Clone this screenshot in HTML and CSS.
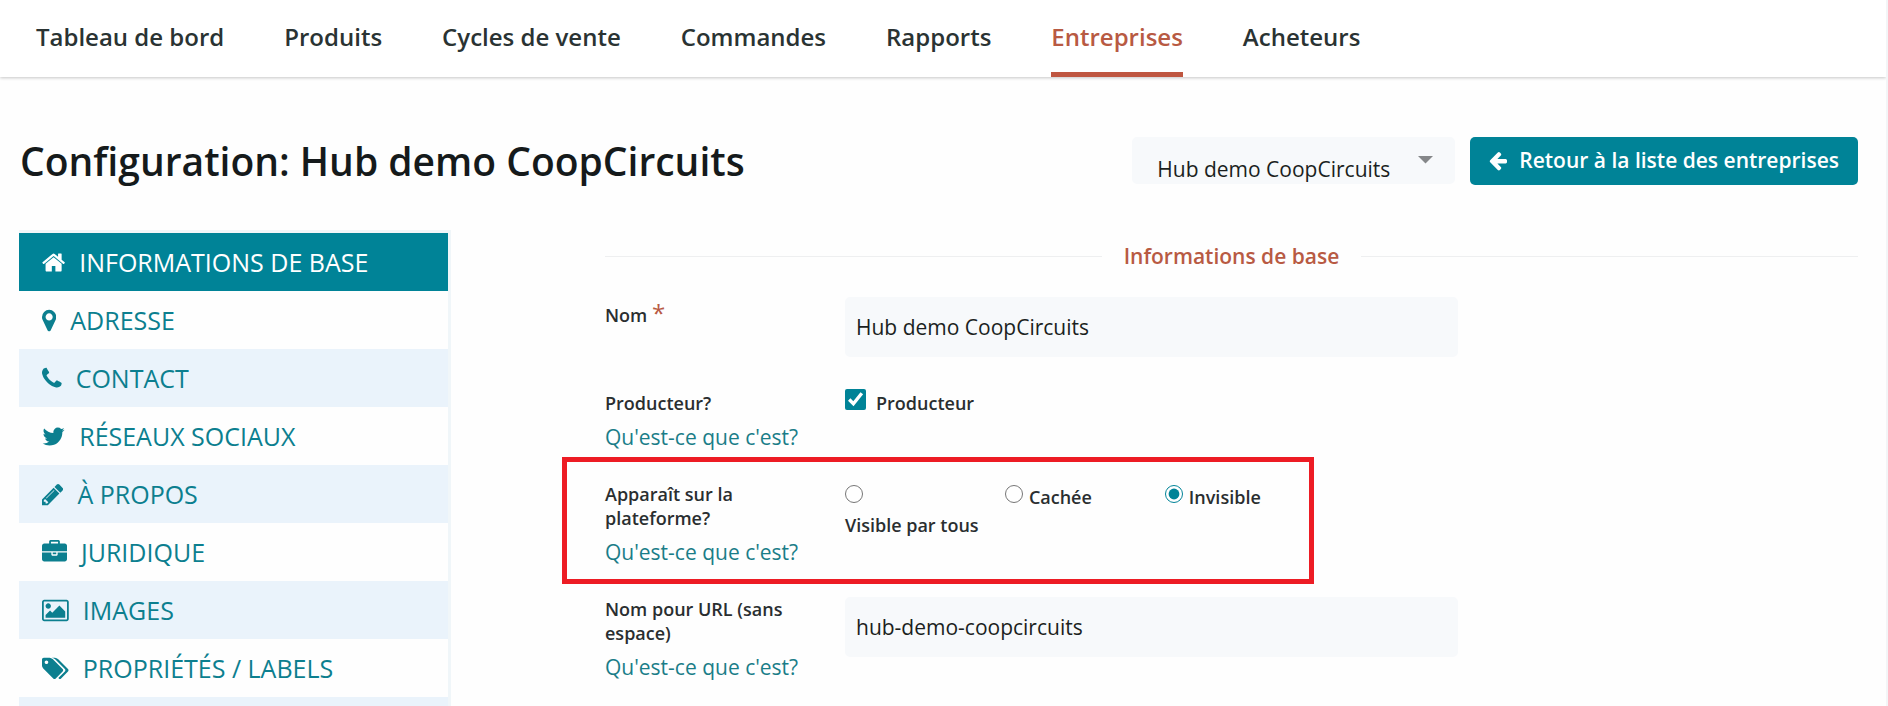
FILE: index.html
```html
<!DOCTYPE html>
<html lang="fr">
<head>
<meta charset="utf-8">
<title>Configuration: Hub demo CoopCircuits</title>
<link rel="stylesheet" href="styles.css">
</head>
<body>
<nav class="topnav">
  <a href="#">Tableau de bord</a>
  <a href="#">Produits</a>
  <a href="#">Cycles de vente</a>
  <a href="#">Commandes</a>
  <a href="#">Rapports</a>
  <a href="#" class="active" aria-current="page">Entreprises</a>
  <a href="#">Acheteurs</a>
</nav>

<header class="page-head">
  <h1>Configuration: Hub demo CoopCircuits</h1>
  <div class="picker">
    <select aria-label="Entreprise"><option>Hub demo CoopCircuits</option></select>
    <svg class="caret" viewBox="0 0 14 7" aria-hidden="true"><path d="M0 0h14L7 7z"/></svg>
  </div>
  <a href="#" class="button"><svg viewBox="128 0 1536 1792" aria-hidden="true"><path d="M1664 896v128q0 53-32.5 90.5t-84.5 37.5h-704l293 294q38 36 38 90t-38 90l-75 76q-37 37-90 37-52 0-91-37l-651-652q-37-37-37-90 0-52 37-91l651-650q38-38 91-38 52 0 90 38l75 74q38 38 38 91t-38 91l-293 293h704q52 0 84.5 37.5t32.5 90.5z"/></svg>Retour à la liste des entreprises</a>
</header>

<div class="layout">
  <nav class="side">
    <a href="#" class="selected"><svg viewBox="64 0 1664 1792" aria-hidden="true"><path d="M1472 992v480q0 26-19 45t-45 19h-384v-384h-256v384h-384q-26 0-45-19t-19-45v-480q0-1 .5-3t.5-3l575-474 575 474q1 2 1 6zm223-69l-62 74q-8 9-21 11h-3q-13 0-21-7l-692-577-692 577q-12 8-24 7-13-2-21-11l-62-74q-8-10-7-23.5t11-21.5l719-599q32-26 76-26t76 26l244 204v-195q0-14 9-23t23-9h192q14 0 23 9t9 23v408l219 182q10 8 11 21.5t-7 23.5z"/></svg>INFORMATIONS DE BASE</a>
    <a href="#"><svg viewBox="384 0 1024 1792" aria-hidden="true"><path d="M1152 640q0-106-75-181t-181-75-181 75-75 181 75 181 181 75 181-75 75-181zm256 0q0 109-33 179l-364 774q-16 33-47.5 52t-67.5 19-67.5-19-46.5-52l-365-774q-33-70-33-179 0-212 150-362t362-150 362 150 150 362z"/></svg>ADRESSE</a>
    <a href="#"><svg viewBox="192 0 1408 1792" aria-hidden="true"><path d="M1600 1240q0 27-10 70.5t-21 68.5q-21 50-122 106-94 51-186 51-27 0-52.5-3.5t-57.5-12.5-47.5-14.5-55.5-20.5-49-18q-98-35-175-83-128-79-264.5-215.5t-215.5-264.5q-48-77-83-175-3-9-18-49t-20.5-55.5-14.5-47.5-12.5-57.5-3.5-52.5q0-92 51-186 56-101 106-122 25-11 68.5-21t70.5-10q14 0 21 3 18 6 53 76 11 19 30 54t35 63.5 31 53.5q3 4 17.5 25t21.5 35.5 7 28.5q0 20-28.5 50t-62 55-62 53-28.5 46q0 9 5 22.5t8.5 20.5 14 24 11.5 19q76 137 174 235t235 174q2 1 19 11.5t24 14 20.5 8.5 22.5 5q18 0 46-28.5t53-62 55-62 50-28.5q14 0 28.5 7t35.5 21.5 25 17.5q25 15 53.5 31t63.5 35 54 30q70 35 76 53 3 7 3 21z"/></svg>CONTACT</a>
    <a href="#"><svg viewBox="64 0 1664 1792" aria-hidden="true"><path d="M1684 408q-67 98-162 167 1 14 1 42 0 130-38 259.5t-115.5 248.5-184.5 210.5-258 146-323 54.5q-271 0-496-145 35 4 78 4 225 0 401-138-105-2-188-64.5t-114-159.5q33 5 61 5 43 0 85-11-112-23-185.5-111.5t-73.5-205.5v-4q68 38 146 41-66-44-105-115t-39-154q0-88 44-163 121 149 294.5 238.5t371.5 99.5q-8-38-8-74 0-134 94.5-228.5t228.5-94.5q140 0 236 102 109-21 205-78-37 115-142 178 93-10 186-50z"/></svg>RÉSEAUX SOCIAUX</a>
    <a href="#"><svg viewBox="128 0 1536 1792" aria-hidden="true"><path d="M491 1536l91-91-235-235-91 91v107h128v128h107zm523-928q0-22-22-22-10 0-17 7l-542 542q-7 7-7 17 0 22 22 22 10 0 17-7l542-542q7-7 7-17zm-54-192l416 416-832 832h-416v-416zm683 96q0 53-37 90l-166 166-416-416 166-165q36-38 90-38 53 0 91 38l235 234q37 39 37 91z"/></svg>À PROPOS</a>
    <a href="#"><svg viewBox="0 0 1792 1792" aria-hidden="true"><path d="M640 256h512v-128h-512v128zm1152 640v480q0 66-47 113t-113 47h-1472q-66 0-113-47t-47-113v-480h672v160q0 26 19 45t45 19h320q26 0 45-19t19-45v-160h672zm-768 0v128h-256v-128h256zm768-480v384h-1792v-384q0-66 47-113t113-47h352v-160q0-40 28-68t68-28h576q40 0 68 28t28 68v160h352q66 0 113 47t47 113z"/></svg>JURIDIQUE</a>
    <a href="#"><svg viewBox="-64 0 1920 1792" aria-hidden="true"><path d="M576 576q0 80-56 136t-136 56-136-56-56-136 56-136 136-56 136 56 56 136zm1024 384v448h-1408v-192l320-320 160 160 512-512zm96-704h-1600q-13 0-22.5 9.5t-9.5 22.5v1216q0 13 9.5 22.5t22.5 9.5h1600q13 0 22.5-9.5t9.5-22.5v-1216q0-13-9.5-22.5t-22.5-9.5zm160 32v1216q0 66-47 113t-113 47h-1600q-66 0-113-47t-47-113v-1216q0-66 47-113t113-47h1600q66 0 113 47t47 113z"/></svg>IMAGES</a>
    <a href="#"><svg viewBox="-64 0 1920 1792" aria-hidden="true"><path d="M384 448q0-53-37.5-90.5t-90.5-37.5-90.5 37.5-37.5 90.5 37.5 90.5 90.5 37.5 90.5-37.5 37.5-90.5zm1067 576q0 53-37 90l-491 492q-39 37-91 37-53 0-90-37l-715-716q-38-37-64.5-101t-26.5-117v-416q0-52 38-90t90-38h416q53 0 117 26.5t102 64.5l715 714q37 39 37 91zm384 0q0 53-37 90l-491 492q-39 37-91 37-36 0-59-14t-53-45l470-470q37-37 37-90 0-52-37-91l-715-714q-38-38-102-64.5t-117-26.5h224q53 0 117 26.5t102 64.5l715 714q37 39 37 91z"/></svg>PROPRIÉTÉS / LABELS</a>
    <span class="rest"></span>
  </nav>

  <form class="form">
    <h2><span>Informations de base</span></h2>

    <div class="row row-name">
      <div class="label"><label for="name">Nom <span class="required">*</span></label></div>
      <input class="text" id="name" type="text" value="Hub demo CoopCircuits">
    </div>

    <div class="row row-producer">
      <div class="label"><span>Producteur?</span><a href="#">Qu'est-ce que c'est?</a></div>
      <label class="check"><input type="checkbox" checked>Producteur</label>
    </div>

    <div class="row highlight" role="radiogroup" aria-labelledby="visible-label">
      <div class="label"><span id="visible-label">Apparaît sur la plateforme?</span><a href="#">Qu'est-ce que c'est?</a></div>
      <div class="radios">
        <label class="radio stacked"><input type="radio" name="visible">Visible par tous</label>
        <label class="radio"><input type="radio" name="visible">Cachée</label>
        <label class="radio"><input type="radio" name="visible" checked>Invisible</label>
      </div>
    </div>

    <div class="row">
      <div class="label"><label for="permalink">Nom pour URL (sans espace)</label><a href="#">Qu'est-ce que c'est?</a></div>
      <input class="text" id="permalink" type="text" value="hub-demo-coopcircuits">
    </div>
  </form>
</div>
</body>
</html>
```
FILE: styles.css
```css
* {
  box-sizing: border-box;
}

html {
  height: 100%;
}

body {
  margin: 0;
  min-height: 100%;
  border-right: 2px solid #f3f5f7;
  background: #fefefe;
  color: #2a2e30;
  font-family: "Open Sans", "Noto Sans", sans-serif;
  font-size: 21px;
}

a {
  color: #1a7d88;
  text-decoration: none;
}

svg {
  display: block;
  fill: currentColor;
}

.topnav {
  display: flex;
  gap: 60px;
  padding: 0 36px;
  background: #fff;
  box-shadow: 0 1px 3px rgba(0, 0, 0, 0.22);
}

.topnav a {
  padding: 20px 0 19px;
  border-bottom: 5px solid transparent;
  color: #2a3333;
  font-size: 24px;
  font-weight: 600;
  line-height: 33px;
}

.topnav .active {
  border-color: #bf5640;
  color: #b85a43;
}

.page-head {
  display: flex;
  align-items: flex-start;
  gap: 15px;
  padding: 60px 28px 0 20px;
}

h1 {
  flex: 1;
  margin: 0;
  color: #151a1b;
  font-size: 39px;
  font-weight: 600;
  line-height: 48px;
}

.picker {
  position: relative;
  width: 323px;
}

.picker select {
  width: 100%;
  height: 47px;
  padding: 16px 40px 0 25px;
  border: 0;
  border-radius: 5px;
  appearance: none;
  background: #f7f9fb;
  color: #1b1f21;
  font: inherit;
  line-height: 30px;
}

.caret {
  position: absolute;
  top: 19px;
  right: 22px;
  width: 15px;
  color: #858789;
  pointer-events: none;
}

.button {
  display: flex;
  align-items: center;
  gap: 12px;
  height: 48px;
  padding: 0 19px 2px;
  border-radius: 5px;
  background: #008397;
  color: #fff;
  font-weight: 600;
}

.button svg {
  height: 21px;
}

.layout {
  display: grid;
  grid-template-columns: 432fr 1253fr;
  column-gap: 154px;
  align-items: start;
  padding: 45px 28px 0 19px;
}

.side {
  border: solid #f0f6f9;
  border-width: 3px 3px 0 0;
}

.side a {
  display: flex;
  align-items: center;
  gap: 14px;
  height: 58px;
  padding: 0 23px;
  color: #0c7f8f;
  font-size: 25px;
}

.side a:nth-child(odd) {
  background: #eaf3fb;
}

.side .selected:first-child {
  background: #008397;
  color: #fff;
}

.side svg {
  height: 25px;
}

.rest {
  display: block;
  height: 9px;
  background: #eaf3fb;
}

h2 {
  display: flex;
  align-items: center;
  gap: 22px;
  margin: 11px 0 26px;
  color: #b85a43;
  font-size: 21px;
  font-weight: 600;
  line-height: 30px;
}

h2::before,
h2::after {
  flex: 1;
  height: 1px;
  background: #eeeff0;
  content: "";
}

.row {
  display: grid;
  grid-template-columns: 240fr 613fr 400fr;
}

.row-name {
  min-height: 92px;
}

.label {
  padding-right: 32px;
  font-size: 18px;
  font-weight: 600;
  line-height: 24px;
}

.label > span,
.label > label {
  display: block;
}

.label > a {
  display: block;
  margin-top: 7px;
  font-size: 21px;
  font-weight: 400;
  line-height: 30px;
}

.required {
  color: #b85a43;
  font-size: 24px;
  font-weight: 400;
}

.row-name .label {
  padding-top: 4px;
}

.row-producer .label {
  padding-top: 2px;
}

.text {
  width: 100%;
  height: 60px;
  padding: 0 11px;
  border: 0;
  border-radius: 5px;
  background: #f7f9fb;
  color: #1b1f21;
  font: inherit;
}

.check,
.radio {
  font-size: 18px;
  font-weight: 600;
  line-height: 24px;
}

input {
  margin: 0;
  accent-color: #008397;
}

.check {
  display: flex;
  align-items: flex-start;
  gap: 10px;
  line-height: 28px;
}

.check input {
  width: 21px;
  height: 21px;
}

.highlight {
  grid-template-columns: 240fr 464fr;
  width: 60%;
  margin: 5px 0 13px -43px;
  padding: 20px 0 12px 38px;
  border: 5px solid #ed1c24;
}

.radios {
  display: grid;
  grid-template-columns: 160fr 160fr 144fr;
  align-items: start;
}

.radio {
  display: flex;
  gap: 6px;
  padding-top: 3px;
}

.radio input {
  width: 18px;
  height: 18px;
}

.stacked {
  flex-direction: column;
  gap: 10px;
}
```
